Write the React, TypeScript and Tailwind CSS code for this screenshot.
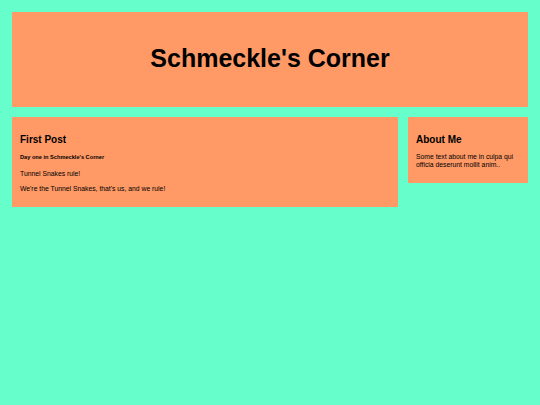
import React from "react";

export default function App() {
  return (
    <div
      className="w-[540px] h-[405px] bg-[#66ffcc] p-[12px] text-black"
      style={{ fontFamily: '"Liberation Sans", Arial, sans-serif' }}
    >
      <header className="h-[95px] bg-[#ff9966] flex items-center justify-center pb-[1px]">
        <h1 className="text-[25px] font-bold leading-normal m-0">Schmeckle's Corner</h1>
      </header>
      <div className="mt-[10px] flex items-start gap-[10px]">
        <main className="w-[386px] bg-[#ff9966] px-[8px] pt-[8px] pb-[14px]">
          <h2 className="mt-[8.8px] text-[10px] leading-[12px] font-bold">First Post</h2>
          <h5 className="mt-[8.2px] text-[5.65px] leading-[6.5px] font-bold">Day one in Schmeckle's Corner</h5>
          <p className="mt-[9.4px] text-[6.8px] leading-[7.8px]">Tunnel Snakes rule!</p>
          <p className="mt-[7.1px] text-[6.8px] leading-[7.8px]">We're the Tunnel Snakes, that's us, and we rule!</p>
        </main>
        <aside className="flex-1 bg-[#ff9966] px-[8px] pt-[8px] pb-[14.6px]">
          <h2 className="mt-[8.8px] text-[10px] leading-[12px] font-bold">About Me</h2>
          <p className="mt-[7.25px] text-[6.8px] leading-[7.8px]">
            Some text about me in culpa qui officia deserunt mollit anim..
          </p>
        </aside>
      </div>
    </div>
  );
}
